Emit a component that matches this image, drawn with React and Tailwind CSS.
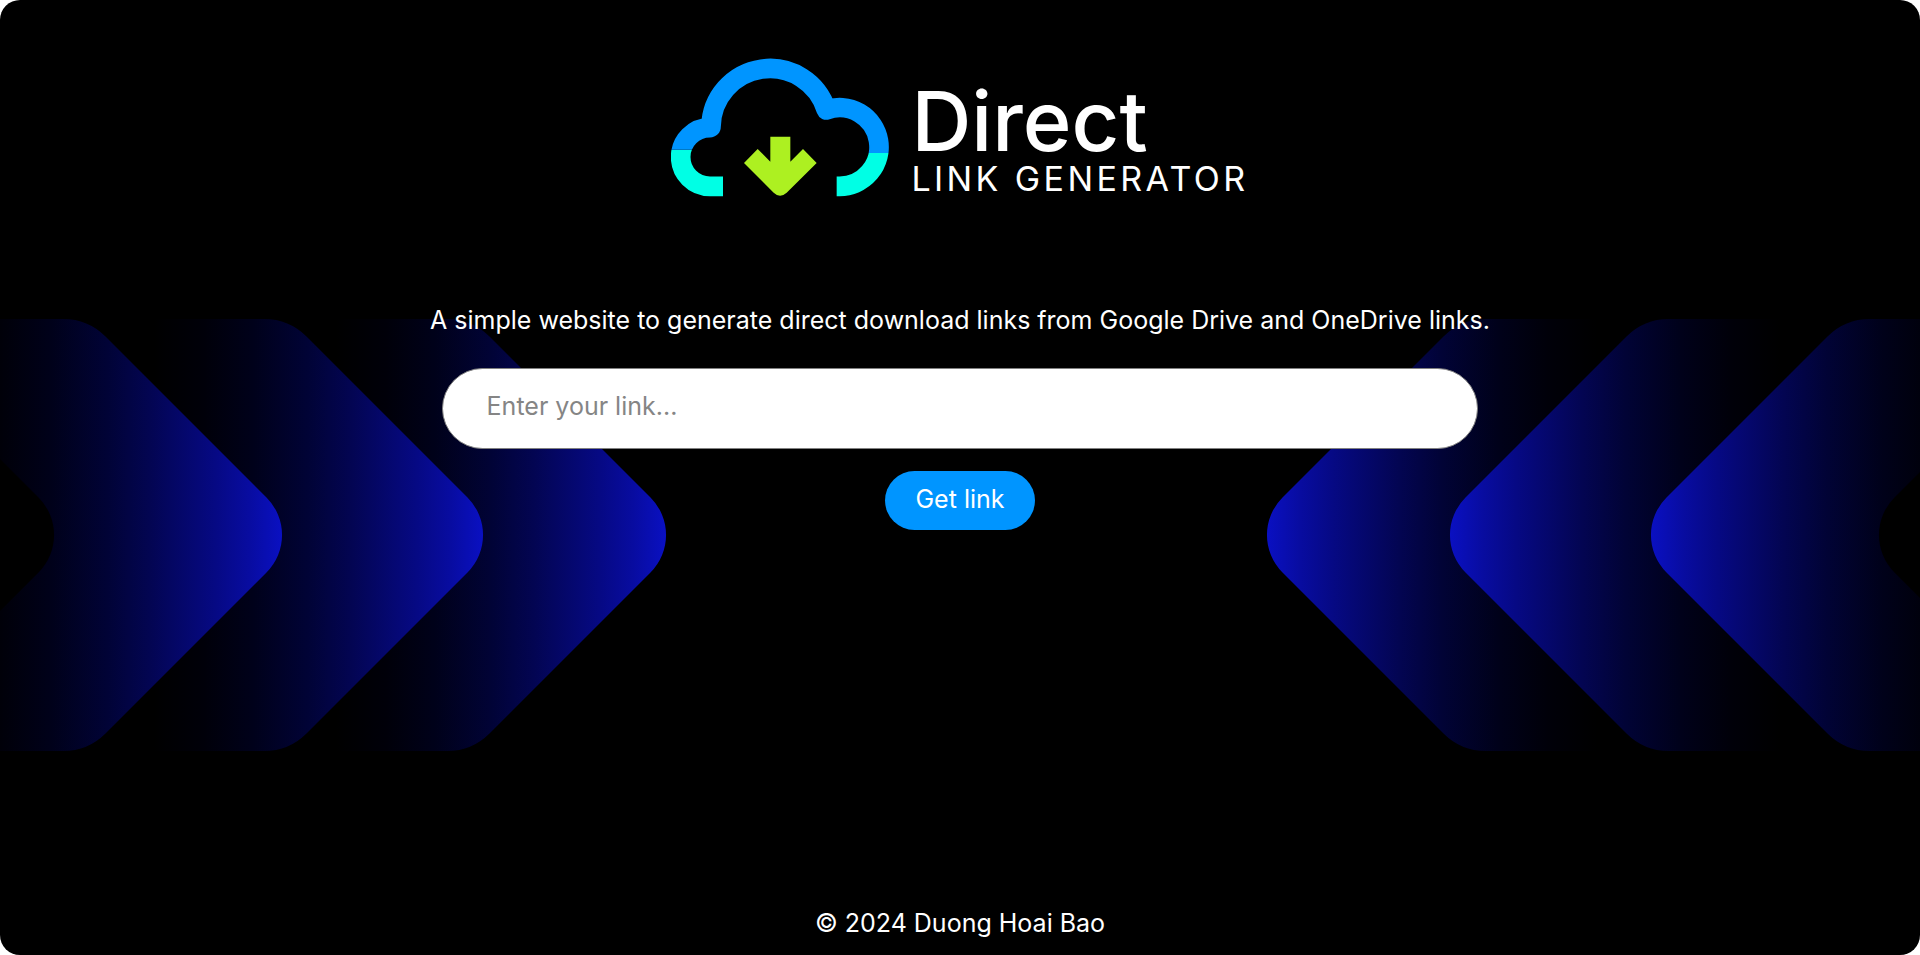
const CHEVRONS = [
  { x: 384, fill: "url(#fade)" },
  { x: 201, fill: "url(#fade)" },
  { x: 0, fill: "url(#fade)" },
  { x: -228, fill: "#000000" },
];

const CLOUD =
  "M562 438H570A118 118 0 1 0 531 209A177 177 0 0 0 185 259Q185 262 182 262A88 88 0 0 0 182 438H221";

function ChevronDefs() {
  return (
    <svg className="absolute size-0" aria-hidden="true">
      <defs>
        <linearGradient id="fade" gradientUnits="userSpaceOnUse" x1="-48" y1="0" x2="282" y2="0">
          <stop offset="0" stopColor="#000000" />
          <stop offset="0.15" stopColor="#000009" />
          <stop offset="0.3" stopColor="#00011a" />
          <stop offset="0.47" stopColor="#010336" />
          <stop offset="0.6" stopColor="#030552" />
          <stop offset="0.8" stopColor="#060984" />
          <stop offset="0.9" stopColor="#080ca0" />
          <stop offset="1" stopColor="#0a10c2" />
        </linearGradient>
        <path
          id="chevron"
          d="M-260 0H63A60 60 0 0 1 105.500 17.500L266.500 178.500A53 53 0 0 1 266.500 253.500L105.500 414.500A60 60 0 0 1 63 432H-260Z"
        />
      </defs>
    </svg>
  );
}

function Chevrons({ viewBox, className }) {
  return (
    <svg viewBox={viewBox} className={className} aria-hidden="true">
      {CHEVRONS.map((c) => (
        <use key={c.x} href="#chevron" fill={c.fill} transform={`translate(${c.x} 0)`} />
      ))}
    </svg>
  );
}

function LogoMark() {
  return (
    <svg viewBox="65 53 654 416" className="w-[218px] shrink-0" aria-hidden="true">
      <clipPath id="upper">
        <path d="M0 0H400V328H0ZM400 0H780V338H400Z" />
      </clipPath>
      <clipPath id="lower">
        <path d="M0 328H400V510H0ZM400 338H780V510H400Z" />
      </clipPath>
      <g fill="none" strokeWidth="59" strokeLinejoin="round">
        <path d={CLOUD} stroke="#0095ff" clipPath="url(#upper)" />
        <path d={CLOUD} stroke="#00ffe5" clipPath="url(#lower)" />
      </g>
      <path
        fill="#adf021"
        d="M363 289H423V364L461 326L502 368L412 457Q392 475 373 457L284 368L325 326L363 364Z"
      />
    </svg>
  );
}

export default function App() {
  return (
    <div className="bg-white">
      <ChevronDefs />
      <div className="relative isolate flex min-h-screen flex-col items-center overflow-hidden rounded-[20px] bg-black font-['Inter',sans-serif] text-[25px] text-white">
        <div className="absolute inset-x-0 top-[319px] -z-10 flex justify-between">
          <Chevrons viewBox="0 0 667 432" className="w-[667px]" />
          <Chevrons viewBox="13 0 654 432" className="w-[654px] -scale-x-100" />
        </div>

        <header className="flex items-end gap-[22px] pt-[58px]">
          <LogoMark />
          <h1 className="flex flex-col gap-3 pb-1">
            <span className="text-[83px] leading-[64px] font-medium">Direct</span>
            <span className="text-[34px] leading-[28px] tracking-widest">LINK GENERATOR</span>
          </h1>
        </header>

        <main className="flex w-[54%] flex-col items-center pt-[107px]">
          <p className="text-center whitespace-nowrap leading-8">
            A simple website to generate direct download links from Google Drive and OneDrive links.
          </p>
          <form className="mt-8 flex w-full flex-col items-center gap-[22px]" onSubmit={(e) => e.preventDefault()}>
            <input
              type="text"
              aria-label="Link"
              placeholder="Enter your link..."
              className="h-[81px] w-full rounded-full border border-[#808080] bg-white px-11 pb-1 text-black placeholder:text-[#858585] outline-none"
            />
            <button type="submit" className="h-[59px] rounded-full bg-[#0095ff] px-[30px]">
              Get link
            </button>
          </form>
        </main>

        <footer className="mt-auto pb-4 leading-8">© 2024 Duong Hoai Bao</footer>
      </div>
    </div>
  );
}
